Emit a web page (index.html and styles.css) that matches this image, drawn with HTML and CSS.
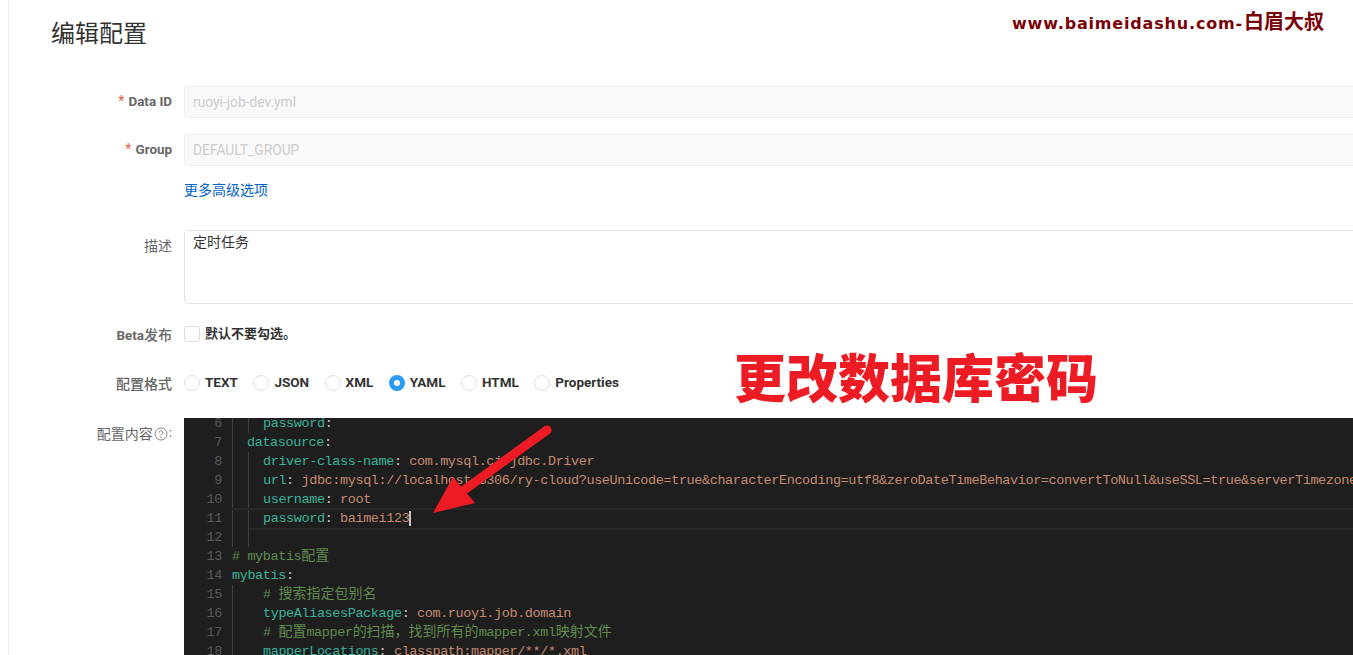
FILE: index.html
```html
<!DOCTYPE html>
<html lang="zh-CN">
<head>
<meta charset="utf-8">
<title>编辑配置</title>
<link rel="stylesheet" href="styles.css">
</head>
<body>
<main class="page">
  <h1 class="title">编辑配置</h1>
  <div class="row row-input">
    <label class="label"><i class="req">*</i> Data ID</label>
    <div class="field input">ruoyi-job-dev.yml</div>
  </div>
  <div class="row row-input">
    <label class="label"><i class="req">*</i> Group</label>
    <div class="field input">DEFAULT_GROUP</div>
  </div>
  <div class="row row-link">
    <span class="label"></span>
    <a class="more">更多高级选项</a>
  </div>
  <div class="row row-area">
    <label class="label label-area">描述</label>
    <div class="field area">定时任务</div>
  </div>
  <div class="row row-beta">
    <label class="label">Beta<span class="cjk">发布</span></label>
    <span class="check"></span>
    <span class="opt opt-zh">默认不要勾选。</span>
  </div>
  <div class="row row-format">
    <label class="label"><span class="cjk">配置格式</span></label>
    <div class="radios">
      <span class="radio"><i class="dot"></i><b class="opt">TEXT</b></span>
      <span class="radio"><i class="dot"></i><b class="opt">JSON</b></span>
      <span class="radio"><i class="dot"></i><b class="opt">XML</b></span>
      <span class="radio"><i class="dot on"></i><b class="opt">YAML</b></span>
      <span class="radio"><i class="dot"></i><b class="opt">HTML</b></span>
      <span class="radio"><i class="dot"></i><b class="opt">Properties</b></span>
    </div>
  </div>
  <div class="row row-editor">
    <label class="label label-editor"><span class="cjk">配置内容</span><svg class="help" viewBox="0 0 14 14" width="14" height="14"><circle cx="7" cy="7" r="6" fill="none" stroke="#888" stroke-width="1"/><path d="M5.3 5.6a1.8 1.8 0 1 1 2.6 1.5c-.6.4-.9.7-.9 1.4" fill="none" stroke="#888" stroke-width="1"/><circle cx="7" cy="10.3" r=".7" fill="#888"/></svg>:</label>
    <div class="editor">
      <div class="code">
        <div class="ln"><span class="n">6</span><span class="t g2"><i class="ind"></i><span class="k">password</span><span class="p">:</span></span></div>
        <div class="ln"><span class="n">7</span><span class="t g1"><i class="ind1"></i><span class="k">datasource</span><span class="p">:</span></span></div>
        <div class="ln"><span class="n">8</span><span class="t g2"><i class="ind"></i><span class="k">driver-class-name</span><span class="p">: </span><span class="v">com.mysql.cj.jdbc.Driver</span></span></div>
        <div class="ln"><span class="n">9</span><span class="t g2"><i class="ind"></i><span class="k">url</span><span class="p">: </span><span class="v">jdbc:mysql://localhost:3306/ry-cloud?useUnicode=true&amp;characterEncoding=utf8&amp;zeroDateTimeBehavior=convertToNull&amp;useSSL=true&amp;serverTimezone=GMT%2B8</span></span></div>
        <div class="ln"><span class="n">10</span><span class="t g2"><i class="ind"></i><span class="k">username</span><span class="p">: </span><span class="v">root</span></span></div>
        <div class="ln cur"><span class="n">11</span><span class="t g2"><i class="ind"></i><span class="k">password</span><span class="p">: </span><span class="v caret">baimei123</span></span></div>
        <div class="ln"><span class="n">12</span><span class="t g2"><i class="ind"></i></span></div>
        <div class="ln"><span class="n">13</span><span class="t"><span class="c"># mybatis<span class="zh">配置</span></span></span></div>
        <div class="ln"><span class="n">14</span><span class="t"><span class="k">mybatis</span><span class="p">:</span></span></div>
        <div class="ln"><span class="n">15</span><span class="t g2"><i class="ind0"></i><span class="c"># <span class="zh">搜索指定包别名</span></span></span></div>
        <div class="ln"><span class="n">16</span><span class="t g2"><i class="ind0"></i><span class="k">typeAliasesPackage</span><span class="p">: </span><span class="v">com.ruoyi.job.domain</span></span></div>
        <div class="ln"><span class="n">17</span><span class="t g2"><i class="ind0"></i><span class="c"># <span class="zh">配置</span>mapper<span class="zh">的扫描，找到所有的</span>mapper.xml<span class="zh">映射文件</span></span></span></div>
        <div class="ln"><span class="n">18</span><span class="t g2"><i class="ind0"></i><span class="k">mapperLocations</span><span class="p">: </span><span class="v">classpath:mapper/**/*.xml</span></span></div>
      </div>
    </div>
  </div>
</main>
<div class="watermark">www.baimeidashu.com-<span class="wm-zh">白眉大叔</span></div>
<div class="note">更改数据库密码</div>
<svg class="arrow" viewBox="0 0 130 100" width="130" height="100">
  <path d="M117 15 L30 78" stroke="#ed1c24" stroke-width="9" stroke-linecap="round" fill="none"/>
  <path d="M3 98 L23 62 L45 88 Z" fill="#ed1c24"/>
</svg>
</body>
</html>
```
FILE: styles.css
```css
* { box-sizing: border-box; }
html, body { margin: 0; height: 100%; overflow: hidden; background: #fff; }
body { font-family: Roboto, "Noto Sans CJK SC", sans-serif; font-size: 12px; color: #333; position: relative; }
.page { margin-left: 8px; border-left: 1px solid #eee; height: 655px; overflow: hidden; display: flex; flex-direction: column; width: 1345px; }
.title { margin: 15px 0 37px 42px; font-size: 24px; line-height: 34px; font-weight: 400; color: #333; font-family: "Noto Sans CJK SC", sans-serif; }
.row { display: flex; flex: none; width: 1500px; }
.label { flex: none; width: 163px; margin-right: 12px; text-align: right; font-weight: 700; font-size: 13.4px; color: #666; line-height: 30px; white-space: nowrap; }
.cjk { font-size: 14px; font-family: "Noto Sans CJK SC", sans-serif; font-weight: 500; }
.req { color: #e8603c; font-style: normal; font-weight: 400; font-size: 14px; margin-right: 1px; }
.row-input { margin-bottom: 16px; }
.field { flex: 1; border: 1px solid #e3e3e3; border-radius: 3px; }
.input { height: 32px; background: #f9f9f9; border-color: #eee; color: #ccc; font-size: 13.8px; line-height: 31px; padding-left: 8px; }
.row-link { height: 32px; margin-top: -10px; }
.more { font-size: 14px; line-height: 34px; color: #0064c8; font-family: "Noto Sans CJK SC", sans-serif; }
.row-area { margin-top: 26px; height: 74px; }
.label-area { font-weight: 400; font-family: "Noto Sans CJK SC", sans-serif; line-height: 30px; font-size: 14px; }
.area { height: 74px; padding: 0 8px; font-size: 14px; line-height: 20px; border-radius: 4px; color: #333; font-family: "Noto Sans CJK SC", sans-serif; }
.row-beta { margin-top: 15px; height: 32px; align-items: center; }
.row-beta .label, .row-format .label { line-height: 32px; }
.row-format { margin-top: 17px; height: 32px; align-items: center; }
.check { width: 16px; height: 16px; margin-right: 5px; margin-top: -3px; border: 1px solid #ddd; border-radius: 3px; flex: none; }
.opt { font-weight: 700; font-size: 13.5px; color: #333; }
.opt-zh { font-size: 13px; margin-top: -6px; font-family: "Noto Sans CJK SC", sans-serif; }
.radios { display: flex; gap: 15.5px; margin-top: -2px; }
.radio { display: flex; align-items: center; gap: 5px; }
.radio .opt { margin-top: -2px; }
.dot { width: 16px; height: 16px; border: 1px solid #ddd; border-radius: 50%; flex: none; }
.dot.on { border: 5px solid #2b9bf4; background: #fff; }
.row-editor { margin-top: 18px; flex: 1; min-height: 0; }
.label-editor { line-height: 30px; height: 30px; font-weight: 400; display: flex; justify-content: flex-end; align-items: center; }
.label-editor .cjk { font-weight: 400; }
.help { margin: 1px 1px 0 1px; }
.editor { flex: 1; background: #1e1e1e; overflow: hidden; min-width: 0; }
.code { margin-top: -4px; font-family: "Liberation Mono", monospace; font-size: 13.5px; letter-spacing: -0.4px; }
.ln { display: flex; height: 19px; line-height: 19px; white-space: pre; position: relative; }
.n { flex: none; width: 38px; text-align: right; color: #5a5a5a; }
.t { margin-left: 10px; position: relative; display: block; height: 19px; }
.cur::after { content: ""; position: absolute; left: 48px; right: 0; top: -1px; height: 18px; border-top: 2px solid #282828; border-bottom: 2px solid #282828; pointer-events: none; }
.ind, .ind0, .ind1 { display: inline-block; height: 19px; vertical-align: top; }
.ind { width: 31px; border-left: 1px solid #404040; box-shadow: inset 15px 0 0 #1e1e1e, inset 16px 0 0 #404040; }
.ind0 { width: 31px; border-left: 1px solid #404040; }
.ind1 { width: 15px; border-left: 1px solid #404040; }
.k { color: #38b39b; }
.p { color: #c8c8c8; }
.v { color: #c58a72; }
.c { color: #608b4e; }
.zh { font-family: "Noto Sans CJK SC", sans-serif; letter-spacing: 0; font-size: 14px; line-height: 0; }
.caret { border-right: 2px solid #c8c8c8; }
.watermark { position: absolute; left: 1012px; top: 12px; font-family: "DejaVu Sans", "Noto Sans CJK SC", sans-serif; font-weight: 700; font-size: 16px; letter-spacing: .82px; color: #7a0008; white-space: nowrap; line-height: 24px; }
.wm-zh { font-family: "Noto Sans CJK SC", sans-serif; font-size: 20px; letter-spacing: 0; margin-left: 1px; line-height: 0; }
.note { position: absolute; left: 734px; top: 338px; font-family: "Noto Sans CJK SC", sans-serif; font-weight: 900; font-size: 52px; line-height: 76px; color: #ed1c24; white-space: nowrap; }
.arrow { position: absolute; left: 430px; top: 415px; }
```
